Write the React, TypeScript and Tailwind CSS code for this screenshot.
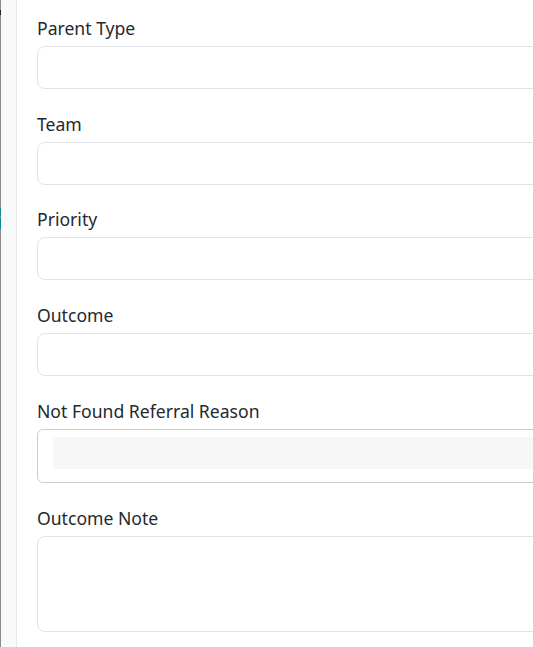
import React from 'react';

const fields = ['Parent Type', 'Team', 'Priority', 'Outcome'];

function Label({ children }: { children: React.ReactNode }) {
  return <label className="block h-[22px] leading-[22px] mb-[7px] text-[17.6px] text-[#24292f]">{children}</label>;
}

export default function App() {
  return (
    <div className="flex w-[533px] h-[647px] overflow-hidden bg-white font-['Noto_Sans',sans-serif]">
      {/* clipped edge of the neighbouring panel */}
      <div className="flex flex-col w-px shrink-0 bg-[#8a8a8a]">
        <div className="h-[10px]" />
        <div className="h-[5px] bg-[#222]" />
        <div className="h-[193px]" />
        <div className="h-[8px] bg-[#0f8a92]" />
        <div className="h-[2px]" />
        <div className="h-[11px] bg-[#0f8a92]" />
      </div>
      <div className="w-4 shrink-0 bg-[#f8f9fa] border-r border-[#e5e7eb]" />

      <div className="flex-1 pl-5 pt-[17px]">
        {fields.map((f) => (
          <div key={f} className="mb-[23.67px]">
            <Label>{f}</Label>
            <div className="w-[560px] h-[43px] rounded-lg border border-[#e1e2e8] bg-white" />
          </div>
        ))}

        <div className="mb-6">
          <Label>Not Found Referral Reason</Label>
          <div className="w-[560px] h-[54px] rounded-md border border-[#cccccc] bg-white pl-[15px] pt-[7px]">
            <div className="h-8 bg-[#f7f7f7]" />
          </div>
        </div>

        <div>
          <Label>Outcome Note</Label>
          <textarea className="block w-[560px] h-[96px] rounded-lg border border-[#e1e2e8] bg-white resize-none outline-none" />
        </div>
      </div>
    </div>
  );
}
